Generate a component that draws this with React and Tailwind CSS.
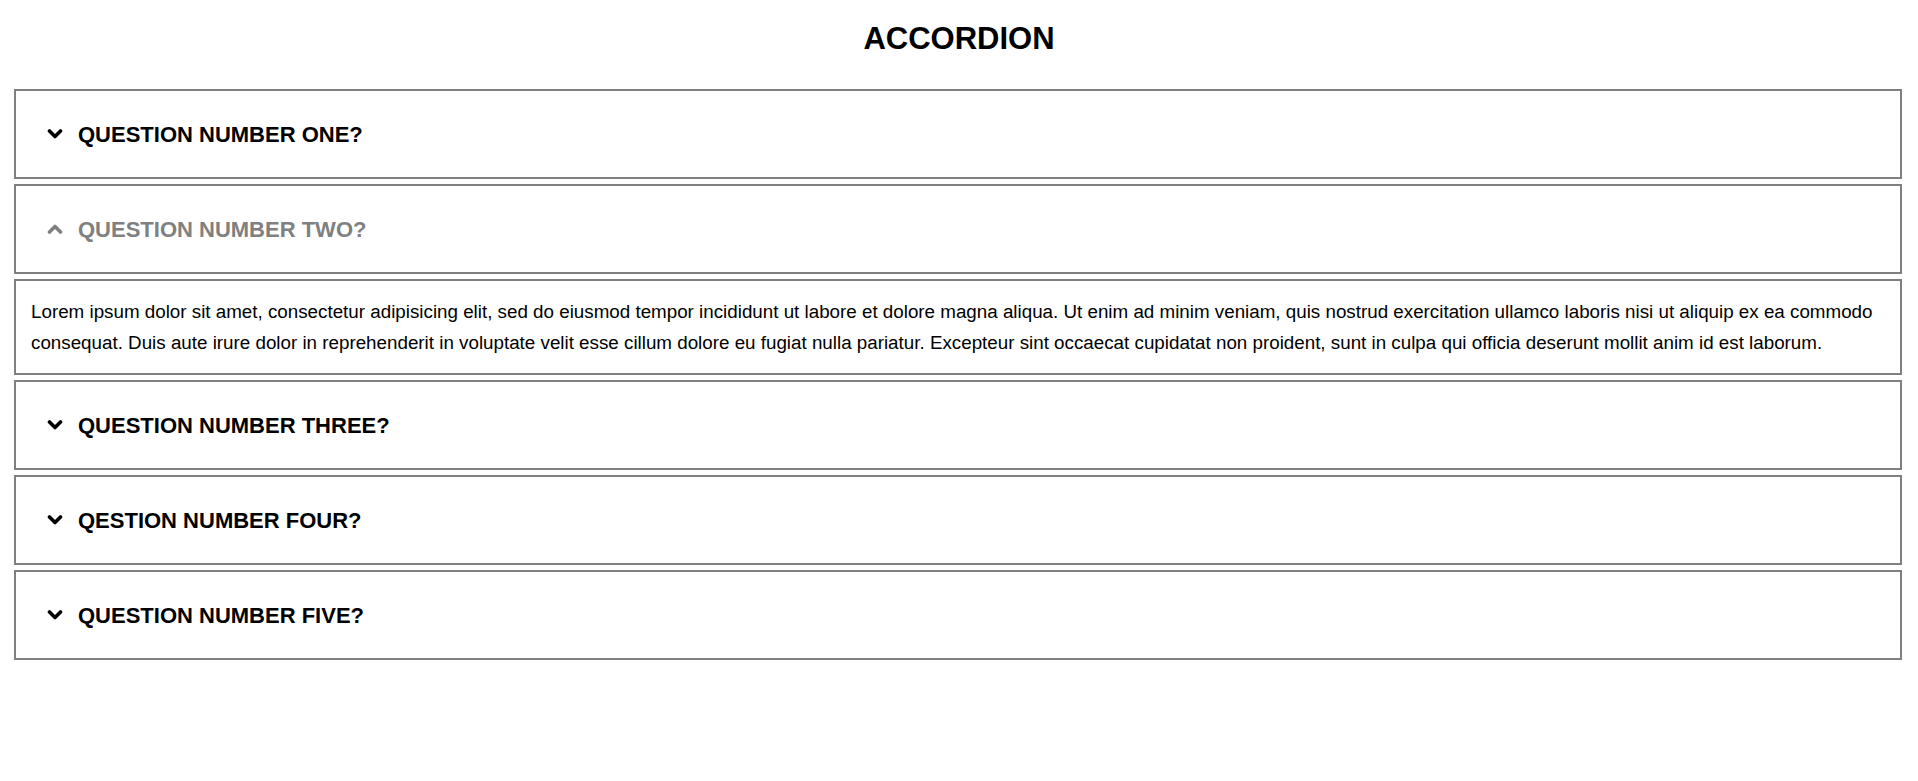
import { useState } from "react";

const items = [
  { q: "QUESTION NUMBER ONE?" },
  { q: "QUESTION NUMBER TWO?" },
  { q: "QUESTION NUMBER THREE?" },
  { q: "QESTION NUMBER FOUR?" },
  { q: "QUESTION NUMBER FIVE?" },
];

const answer =
  "Lorem ipsum dolor sit amet, consectetur adipisicing elit, sed do eiusmod tempor incididunt ut labore et dolore magna aliqua. Ut enim ad minim veniam, quis nostrud exercitation ullamco laboris nisi ut aliquip ex ea commodo consequat. Duis aute irure dolor in reprehenderit in voluptate velit esse cillum dolore eu fugiat nulla pariatur. Excepteur sint occaecat cupidatat non proident, sunt in culpa qui officia deserunt mollit anim id est laborum.";

function Chevron({ up }) {
  return (
    <svg width="16" height="10" viewBox="0 0 16 10" className="shrink-0">
      <path
        d={up ? "M2.5 8 L8 2.5 L13.5 8" : "M2.5 2 L8 7.5 L13.5 2"}
        fill="none"
        stroke="currentColor"
        strokeWidth="3.6"
        strokeLinecap="round"
        strokeLinejoin="round"
      />
    </svg>
  );
}

function App() {
  const [open, setOpen] = useState(1);

  return (
    <main className="min-h-screen bg-white font-['Liberation_Sans',Arial,sans-serif] text-black">
      <h1 className="pt-[21px] text-center text-[31px] font-bold leading-[36px]">
        ACCORDION
      </h1>

      <div className="ml-[14px] mt-[32px] flex w-[1888px] flex-col gap-[5px]">
        {items.map((item, index) => (
          <div key={index} className="flex flex-col gap-[5px]">
            <button
              className={`flex h-[90px] w-full items-center gap-[15px] border-2 border-[#808080] pl-[31px] text-left text-[22px] font-bold ${
                open === index ? "text-[#808080]" : "text-black"
              }`}
              onClick={() => setOpen(open === index ? -1 : index)}
            >
              <Chevron up={open === index} />
              <span>{item.q}</span>
            </button>

            {open === index && (
              <div className="border-2 border-[#808080] px-[15px] py-[15px] text-[18.8px] leading-[31px]">
                {answer}
              </div>
            )}
          </div>
        ))}
      </div>
    </main>
  );
}

export default App;
